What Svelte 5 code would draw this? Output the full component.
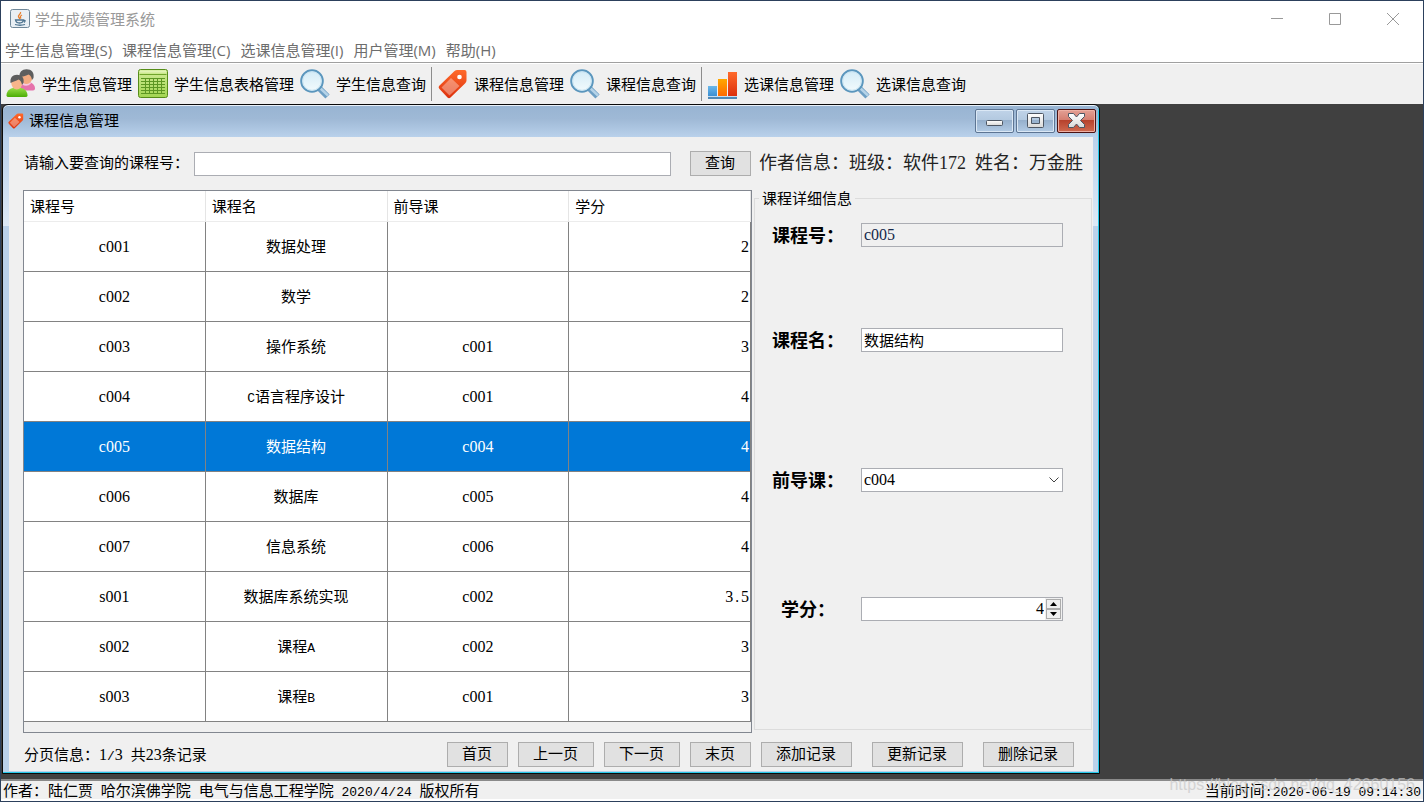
<script>
  const menus = ['学生信息管理(S)', '课程信息管理(C)', '选课信息管理(I)', '用户管理(M)', '帮助(H)'];

  const tools = [
    [
      { icon: 'people', text: '学生信息管理' },
      { icon: 'sheet', text: '学生信息表格管理' },
      { icon: 'lens', text: '学生信息查询' }
    ],
    [
      { icon: 'tag', text: '课程信息管理' },
      { icon: 'lens', text: '课程信息查询' }
    ],
    [
      { icon: 'bars', text: '选课信息管理' },
      { icon: 'lens', text: '选课信息查询' }
    ]
  ];

  const courses = [
    ['c001', '数据处理', '', '2'],
    ['c002', '数学', '', '2'],
    ['c003', '操作系统', 'c001', '3'],
    ['c004', 'C语言程序设计', 'c001', '4'],
    ['c005', '数据结构', 'c004', '4'],
    ['c006', '数据库', 'c005', '4'],
    ['c007', '信息系统', 'c006', '4'],
    ['s001', '数据库系统实现', 'c002', '3.5'],
    ['s002', '课程A', 'c002', '3'],
    ['s003', '课程B', 'c001', '3']
  ];

  let selected = $state(4);
  let keyword = $state('');
  let name = $state('数据结构');
  let prior = $state('c004');
  let credit = $state('4');

  function pick(i) {
    selected = i;
    [, name, prior, credit] = courses[i];
  }

  function step(d) {
    credit = String(Math.max(0, Number(credit) + d));
  }

  // Splits a text into digit runs, other half-width runs and full-width runs.
  function runs(text) {
    return text.match(/[a-z0-9]+|[^a-z0-9\u0080-\uffff]+|[\u0080-\uffff]+/g) ?? [];
  }
  function runClass(part) {
    if (/^[a-z0-9]/.test(part)) return 'code';
    return part.charCodeAt(0) < 128 ? 'half' : '';
  }
</script>

{#snippet mixed(text)}{#each runs(text) as part}{#if runClass(part)}<span class={runClass(part)}>{part}</span>{:else}{part}{/if}{/each}{/snippet}

{#snippet tagShape()}
  <path d="M1 17 16 2.500Q17 1 19 1h7.500Q28.500 1 28.500 3v8.500Q28.500 13 27 14.500L12.500 28.500Q11 30 9.500 28.500L1.500 20Q0 18.500 1 17Z" fill="url(#tagFill)" />
  <path d="m3.500 18.500 9.500-9.500 8.500 8-10 9.500Z" fill="#fff" opacity=".35" />
  <circle cx="21.500" cy="8" r="2.300" fill="#fff" />
{/snippet}

{#snippet glyph(kind)}
  <svg class="tool-icon" viewBox="0 0 30 30" aria-hidden="true">
    {#if kind === 'people'}
      <path d="M14 20c1-5 4-7 8-7s7 3 7 6.500q0 2-2 2H15Z" fill="#e673ab" />
      <path d="M16 12.500q4 4 8 0l1 2q-4 4-9 1Z" fill="#f6c9dd" />
      <ellipse cx="20.500" cy="8.500" rx="5.800" ry="6.500" fill="#f3ab80" />
      <path d="M13.500 8.500C13 3 16 .300 20.500.300c5 0 8 3.200 7 8.700l-1.500 2c-.500-3-1.500-4.500-3.500-5.500-3 2-6 1.500-9 3Z" fill="#5e5e5e" />
      <path d="M.500 26.500C.500 21 5 18.500 11 18.500s10.500 2.500 10.500 8q0 1.500-2 1.500h-17q-2 0-2-1.500Z" fill="url(#greenFill)" />
      <ellipse cx="10.800" cy="13.500" rx="5.600" ry="7" fill="#f7b58b" />
      <path d="M4.500 14C4 8.500 6.500 5.800 11 5.800s7.500 2.700 6.500 8.200l-1.500 2c-.500-3-1.500-4.500-3.500-5.500-2.500 2-5 1.500-8 3.500Z" fill="#5e5e5e" />
    {:else if kind === 'sheet'}
      <rect x=".500" y=".500" width="29" height="28" rx="2" fill="url(#sheetFill)" stroke="#568d19" />
      <path d="M1.500 5.500h27" stroke="#6fa52b" />
      <path d="M2 2.500h26" stroke="#e0f2b4" stroke-width="2" />
      <path d="M3 9.500h24M3 12.500h24M3 15.500h24M3 18.500h24M3 21.500h24M3 24.500h24M7.500 9v16M11.500 9v16M15.500 9v16M19.500 9v16M23.500 9v16" stroke="#5d9723" fill="none" />
    {:else if kind === 'lens'}
      <path d="m19 19 8.500 8.500" stroke="#6d9fc4" stroke-width="6" />
      <path d="m19.500 18.500 8.500 8" stroke="#b5d3e8" stroke-width="2.500" />
      <circle cx="12" cy="12" r="10.800" fill="url(#lensFill)" stroke="#5b96bd" stroke-width="2" />
      <circle cx="12" cy="12" r="9.300" fill="none" stroke="#c7e2f1" />
    {:else if kind === 'tag'}
      {@render tagShape()}
    {:else}
      <rect x="0" y="17" width="9" height="10" fill="url(#blueFill)" />
      <rect x="10" y="10" width="9" height="17" fill="url(#orangeFill)" />
      <rect x="20" y="3" width="9" height="24" fill="url(#tagFill)" />
      <path d="M0 27.500h29" stroke="#c5ddf1" />
      <path d="M0 29h29" stroke="#5089b6" stroke-width="2" />
    {/if}
  </svg>
{/snippet}

<svg class="defs" aria-hidden="true">
  <defs>
    <linearGradient id="tagFill" x2="0" y2="1"><stop stop-color="#ff6a2b" /><stop offset="1" stop-color="#dc300d" /></linearGradient>
    <linearGradient id="sheetFill" x2="0" y2="1"><stop stop-color="#d2ec98" /><stop offset="1" stop-color="#a2d552" /></linearGradient>
    <linearGradient id="greenFill" x2="0" y2="1"><stop stop-color="#9be04a" /><stop offset="1" stop-color="#4bad05" /></linearGradient>
    <linearGradient id="lensFill" x2="0" y2="1"><stop stop-color="#d3ebf6" /><stop offset="1" stop-color="#f3fbfd" /></linearGradient>
    <linearGradient id="blueFill" x2="0" y2="1"><stop stop-color="#6bb8ea" /><stop offset="1" stop-color="#3b8fd2" /></linearGradient>
    <linearGradient id="orangeFill" x2="0" y2="1"><stop stop-color="#ffa800" /><stop offset="1" stop-color="#ff6a00" /></linearGradient>
    <linearGradient id="capFill" x2="0" y2="1"><stop stop-color="#fff" /><stop offset="1" stop-color="#d9d9d9" /></linearGradient>
  </defs>
</svg>

<div class="app">
  <header class="titlebar">
    <svg class="java" viewBox="0 0 20 19" aria-hidden="true">
      <rect x=".500" y=".500" width="19" height="18" rx="2" fill="#e9eff4" stroke="#6f8799" />
      <path d="M10.500 3c1 2-3 3-2 5l1.500 2M12 6c-2 1-2 2-1 3.500" fill="none" stroke="#e8802f" stroke-width="1.300" />
      <path d="M5.500 11h8q-.500 3-4 3t-4-3ZM13.500 11.500q3-.500.500 2M5 15.500q5 1.500 10 0" fill="none" stroke="#4d738f" stroke-width="1.300" />
    </svg>
    <span class="app-title">学生成绩管理系统</span>
    <div class="caption">
      <button aria-label="最小化"><svg viewBox="0 0 12 12"><path d="M0 5.500h12" /></svg></button>
      <button aria-label="最大化"><svg viewBox="0 0 12 12"><path d="M.500.500h11v11H.500Z" /></svg></button>
      <button aria-label="关闭"><svg viewBox="0 0 12 12"><path d="m0 0 12 12M12 0 0 12" /></svg></button>
    </div>
  </header>

  <nav class="menubar">
    {#each menus as m}<button>{m}</button>{/each}
  </nav>

  <div class="toolbar">
    {#each tools as group, g}
      {#if g}<i class="sep"></i>{/if}
      {#each group as t}
        <button>{@render glyph(t.icon)}<span>{t.text}</span></button>
      {/each}
    {/each}
  </div>

  <main class="desktop">
    <section class="window">
      <header class="wintitle">
        <svg class="wintag" viewBox="0 0 30 30" aria-hidden="true">{@render tagShape()}</svg>
        <h1>课程信息管理</h1>
        <div class="winbtns">
          <button aria-label="最小化"><svg viewBox="0 0 20 18"><rect x="1.500" y="8.500" width="16" height="5" rx="1" /></svg></button>
          <button aria-label="还原"><svg viewBox="0 0 20 18"><path fill-rule="evenodd" d="M1.500 2.500q0-1 1-1h14q1 0 1 1v12q0 1-1 1h-14q-1 0-1-1ZM5.500 5.500v6h8v-6Z" /></svg></button>
          <button class="close" aria-label="关闭"><svg viewBox="0 0 20 18"><path d="M1.500 1.500h5l3 3.500 3-3.500h5v3L13.500 8.500l4 4v3h-5l-3-3.500-3 3.500h-5v-3l4-4-4-4Z" /></svg></button>
        </div>
      </header>

      <div class="winbody">
        <div class="search">
          <label for="kw">请输入要查询的课程号：</label>
          <input id="kw" type="text" bind:value={keyword} />
          <button class="btn">查询</button>
        </div>
        <p class="author">{@render mixed('作者信息：班级：软件172 姓名：万金胜')}</p>

        <div class="scroller">
          <table>
            <thead>
              <tr><th>课程号</th><th>课程名</th><th>前导课</th><th>学分</th></tr>
            </thead>
            <tbody>
              {#each courses as row, i}
                <tr class:on={i === selected} onclick={() => pick(i)}>
                  {#each row as cell}<td>{@render mixed(cell)}</td>{/each}
                </tr>
              {/each}
            </tbody>
          </table>
        </div>

        <fieldset>
          <legend>课程详细信息</legend>
          <div class="form">
            <label for="no">课程号：</label>
            <input id="no" class="code" type="text" readonly value={courses[selected][0]} />
            <label for="name">课程名：</label>
            <input id="name" type="text" bind:value={name} />
            <label for="prior">前导课：</label>
            <div class="combo">
              <select id="prior" class="code" bind:value={prior}>
                <option value=""></option>
                {#each courses as c}<option value={c[0]}>{c[0]}</option>{/each}
              </select>
              <svg viewBox="0 0 10 6" aria-hidden="true"><path d="m.500.500 4.500 4.500L9.500.500" /></svg>
            </div>
            <label for="credit">学分：</label>
            <div class="spinner">
              <input id="credit" class="code" type="text" bind:value={credit} />
              <div class="arrows">
                <button aria-label="增加" onclick={() => step(1)}><svg viewBox="0 0 7 4"><path d="M0 4 3.500 0 7 4Z" /></svg></button>
                <button aria-label="减少" onclick={() => step(-1)}><svg viewBox="0 0 7 4"><path d="M0 0 3.500 4 7 0Z" /></svg></button>
              </div>
            </div>
          </div>
        </fieldset>

        <div class="pager">
          <span>{@render mixed('分页信息：1/3 共23条记录')}</span>
          <button class="btn">首页</button>
          <button class="btn">上一页</button>
          <button class="btn">下一页</button>
          <button class="btn">末页</button>
        </div>
        <div class="actions">
          <button class="btn">添加记录</button>
          <button class="btn">更新记录</button>
          <button class="btn">删除记录</button>
        </div>
      </div>
    </section>
  </main>

  <footer class="status">
    <span>{@render mixed('作者：陆仁贾 哈尔滨佛学院 电气与信息工程学院 2020/4/24 版权所有')}</span>
    <span>{@render mixed('当前时间:2020-06-19 09:14:30')}</span>
    <span class="watermark">https://blog.csdn.net/qq_42660156</span>
  </footer>
</div>

<style>
  :global(body) { margin: 0; }
  * { box-sizing: border-box; }
  .defs { position: absolute; width: 0; height: 0; }
  .app {
    display: flex;
    flex-direction: column;
    height: 100vh;
    border: 1px solid #2c405c;
    background: #f0f0f0;
    color: #000;
    font: 15px/20px "Noto Sans CJK SC", sans-serif;
    overflow: hidden;
  }
  button, input, select { font: inherit; color: inherit; margin: 0; }
  button { padding: 0; border: 0; background: none; white-space: nowrap; }
  .half { font-family: "Liberation Mono", monospace; font-size: 13px; line-height: 1; white-space: pre; }
  .code { font-family: "Liberation Serif", serif; font-size: 16px; line-height: 1; }

  .titlebar { display: flex; align-items: center; height: 37px; padding: 0 1px 2px 9px; background: #fff; color: #999; }
  .java { width: 20px; height: 19px; margin-right: 5px; }
  .caption { display: flex; margin-left: auto; }
  .caption button { display: grid; place-items: center; width: 58px; height: 35px; }
  .caption svg { width: 12px; height: 12px; fill: none; stroke: #999; }

  .menubar { display: flex; gap: 10px; height: 25px; padding-left: 4px; background: #fff; border-bottom: 1px solid #a0a0a0; color: #6d6d6d; }
  .menubar button { font-family: "Open Sans", "Noto Sans CJK SC", sans-serif; }

  .toolbar { display: flex; align-items: center; gap: 6px; height: 41px; padding: 0 0 1px 5px; border-top: 1px solid #fff; }
  .toolbar button { display: flex; align-items: center; gap: 6px; }
  .tool-icon { width: 30px; height: 30px; overflow: visible; }
  .sep { width: 1px; height: 34px; margin-left: -1px; background: #8c8c8c; }

  .desktop { position: relative; flex: 1; background: #404040; }
  .window {
    position: absolute;
    inset: 0 323px 5px 1px;
    display: flex;
    flex-direction: column;
    border: 1px solid #0a0a0a;
    border-radius: 6px 6px 0 0;
    background: linear-gradient(#98b4d2, #9fb9d6 14px, #b9d1eb 32px, #dde9f6 121px, #bad1ea 121px);
    box-shadow: inset 0 1px #e9f1f9, inset -1px -1px #25c9ea;
  }
  .wintitle { display: flex; align-items: center; height: 32px; padding: 0 3px 0 5px; }
  .wintag { width: 16px; height: 16px; margin-right: 5px; }
  h1 { margin: 0; padding-bottom: 2px; font: inherit; }
  .winbtns { display: flex; gap: 2px; margin-left: auto; }
  .winbtns button {
    display: grid;
    place-items: center;
    width: 39px;
    height: 24px;
    border: 1px solid #5d7593;
    border-radius: 2px;
    box-shadow: inset 0 0 0 1px #dbe8f5;
    background: linear-gradient(#c0d3e8, #b3c9e0 45%, #94aecb 45%, #b2cbe5);
  }
  .winbtns svg { width: 20px; height: 18px; fill: url(#capFill); stroke: #4d5663; }
  .winbtns .close { border-color: #4b1212; box-shadow: inset 0 0 0 1px #eeb0a4; background: linear-gradient(#e3a095, #d57e70 45%, #b5402b 45%, #cf6a50); }

  .winbody {
    flex: 1;
    display: grid;
    grid-template-columns: minmax(0, 1fr) 338px;
    grid-template-rows: 25px minmax(0, 1fr) 25px;
    column-gap: 2px;
    margin: 0 6px 2px;
    padding: 14px 1px 4px 14px;
    background: #f0f0f0;
  }
  .btn { height: 25px; padding: 0 15px 0 14px; border: 1px solid #adadad; background: #e1e1e1; line-height: 20px; padding-bottom: 3px; }
  input, select { height: 24px; min-width: 0; border: 1px solid #abadb3; border-radius: 0; background: #fff; padding: 0 2px; outline: 0; }
  #name { padding-bottom: 2px; }
  .search { display: flex; align-items: center; padding: 0 1px; }
  .search label { padding-bottom: 4px; }
  .search input { flex: 1; margin: 0 19px 0 5px; }
  .author { margin: 0; padding-left: 5px; font-size: 18px; line-height: 20px; white-space: nowrap; color: #222; }
  .author :is(.code) { font-size: 18px; }
  .author :is(.half) { font-size: 15px; }

  .scroller { margin: 14px 0 9px; border: 1px solid #828790; overflow: hidden; }
  table { width: 100%; table-layout: fixed; border-collapse: separate; border-spacing: 0; background: #fff; }
  th { height: 31px; padding: 0 6px; border-right: 1px solid #e5e5e5; border-bottom: 1px solid #ececec; text-align: left; font-weight: 400; }
  td { height: 50px; padding: 0 1px 2px; border-right: 1px solid #828282; border-bottom: 1px solid #828282; text-align: center; }
  td:last-child { text-align: right; }
  .on td { background: #0078d7; color: #fff; }

  fieldset { display: flex; flex-direction: column; min-width: 0; margin: 14px 0 12px; padding: 0; border: 1px solid #dcdcdc; }
  legend { margin-left: 4px; padding: 0 3px; line-height: 16px; }
  .form {
    flex: 1;
    display: grid;
    grid-template-columns: 106px minmax(0, 1fr);
    grid-template-rows: 58fr 152fr 128fr 130fr 55fr;
    align-items: center;
    padding-right: 28px;
  }
  .form label { padding-bottom: 3px; text-align: center; font-size: 18px; font-weight: 700; }
  .form input, .form select { width: 100%; }
  .form input[readonly] { background: #f0f0f0; color: #14284b; }
  .combo { position: relative; display: flex; }
  .combo select { appearance: none; }
  .combo svg { position: absolute; right: 4px; top: 9px; width: 10px; height: 6px; fill: none; stroke: #444; pointer-events: none; }
  .spinner { display: flex; height: 24px; border: 1px solid #abadb3; background: #fff; }
  .spinner input { flex: 1; height: 22px; border: 0; padding: 0 1px; text-align: right; }
  .arrows { display: flex; flex-direction: column; justify-content: center; padding: 0 1px; background: #f0f0f0; }
  .arrows button { display: grid; place-items: center; width: 15px; height: 10px; border: 1px solid #acacac; }
  .arrows svg { width: 7px; height: 4px; }

  .pager { display: flex; align-items: center; gap: 10px; padding: 0 1px; }
  .pager > span { margin-right: auto; padding-bottom: 2px; white-space: nowrap; }
  .actions { display: flex; gap: 20px; padding-left: 7px; }

  .status { position: relative; display: flex; align-items: center; justify-content: space-between; height: 22px; padding: 0 2px; border-top: 2px solid #8a8a8a; border-bottom: 2px solid #fff; white-space: nowrap; }
  .status :is(.code) { font-family: "Liberation Mono", monospace; font-size: 13px; }
  .watermark { position: absolute; right: 8px; top: -6px; font: 16px/20px "Liberation Sans", sans-serif; color: #c8c8c8; opacity: .7; }
</style>
